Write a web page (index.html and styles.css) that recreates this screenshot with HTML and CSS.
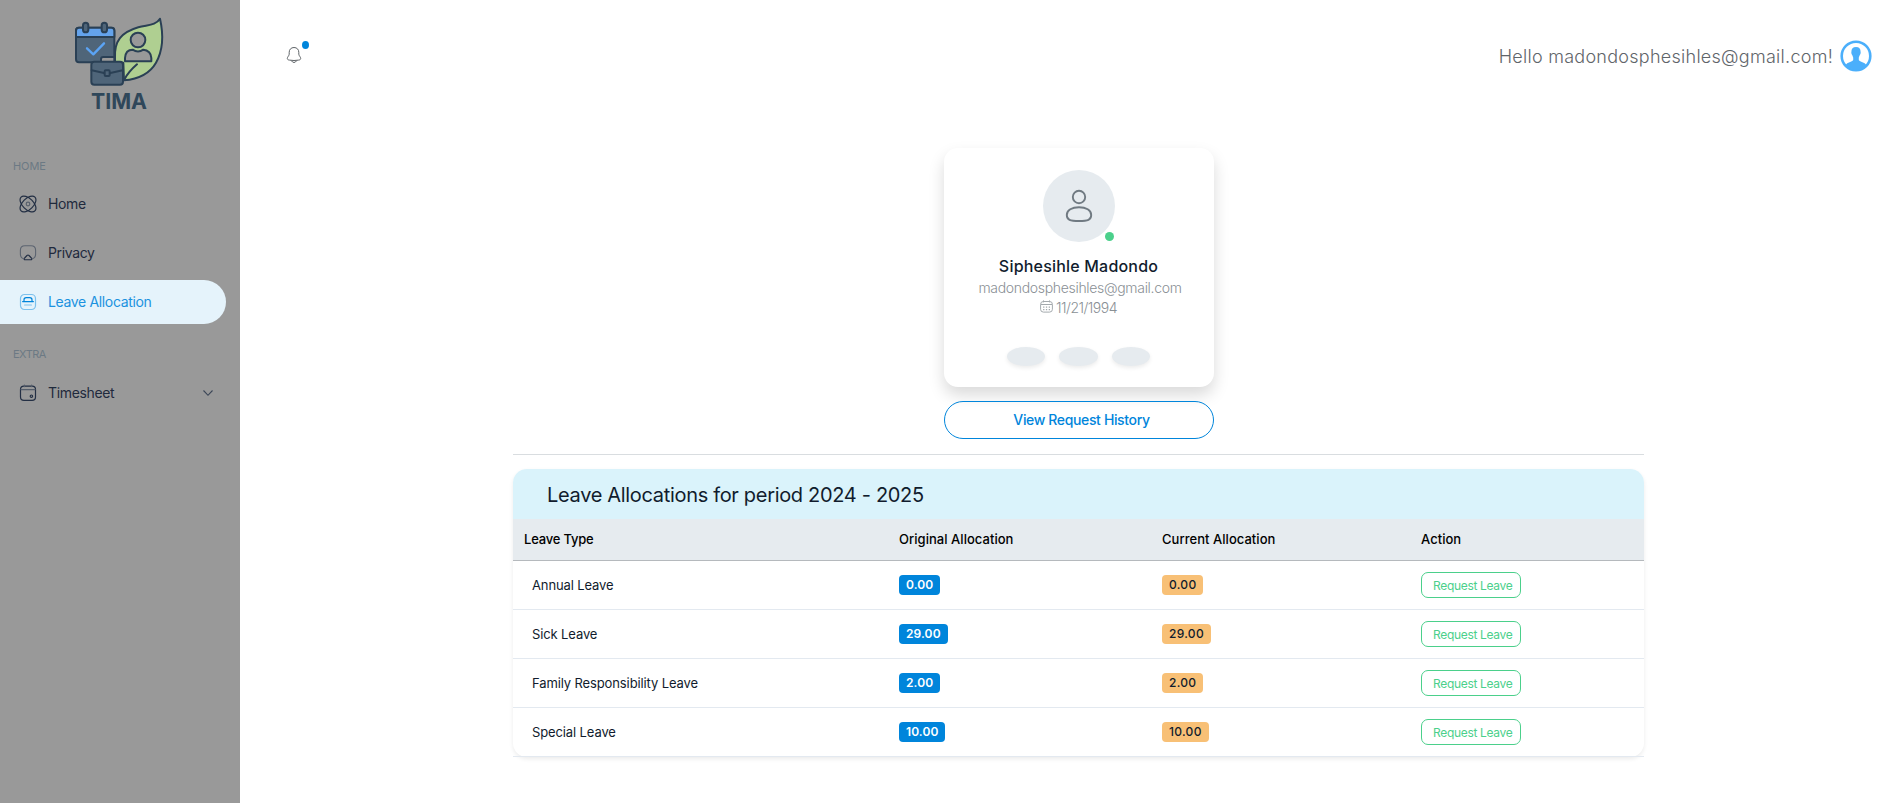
FILE: index.html
```html
<!DOCTYPE html>
<html lang="en">
<head>
<meta charset="utf-8">
<title>Leave Allocation - TIMA</title>
<link rel="stylesheet" href="styles.css">
</head>
<body>
<aside class="sidebar">
  <a class="brand" href="#">
    <svg width="120" height="110" viewBox="0 0 360 330" fill="none" stroke="#2a4055" stroke-width="6" stroke-linecap="round" stroke-linejoin="round">
      <path fill="#afcf91" d="M192 211C235 207 268 193 288 158C311 117 310 70 300 26C287 47 263 44 235 52C184 67 162 93 165 145L165 158H190Z"/>
      <path d="M194 207C202 192 215 177 231 163"/>
      <circle cx="234" cy="90" r="22" fill="#999"/>
      <path fill="#999" d="M195 154V144C196 127 206 119 218 119Q234 130 250 119C264 120 274 130 274 144V154Z"/>
      <rect x="48" y="53" width="115" height="104" rx="9" fill="#4f6579"/>
      <path fill="#64a3ec" d="M48 81V62Q48 53 57 53H154Q163 53 163 62V81Z"/>
      <rect x="69" y="38" width="16" height="29" rx="8" fill="#4f6579"/>
      <rect x="125" y="38" width="16" height="29" rx="8" fill="#4f6579"/>
      <path stroke="#5ba4f5" stroke-width="7" d="M81 115L100 133L132 100"/>
      <path fill="#999" d="M123 155V147Q123 141 130 141H163V155"/>
      <rect x="94" y="155" width="95" height="69" rx="9" fill="#4f6579"/>
      <path d="M95 181L132 189M151 189L188 181"/>
      <rect x="134" y="181" width="15" height="17" rx="3" fill="#4f6579"/>
      <text class="brand-name" x="93" y="297">TIMA</text>
    </svg>
  </a>
  <div class="nav-title">HOME</div>
  <nav class="nav">
    <a class="nav-item" href="#">
      <svg width="18" height="18" viewBox="0 0 18 18" fill="none" stroke="#232f44" stroke-width="1.2">
        <ellipse cx="9" cy="9" rx="9.8" ry="5.4" transform="rotate(45 9 9)"/>
        <ellipse cx="9" cy="9" rx="9.8" ry="5.4" transform="rotate(-45 9 9)"/>
        <circle cx="9" cy="9" r="1.8" stroke="#59616d"/>
      </svg>
      <span>Home</span>
    </a>
    <a class="nav-item" href="#">
      <svg width="18" height="18" viewBox="0 0 18 18" fill="none" stroke="#232f44" stroke-width="1.1" stroke-linejoin="round">
        <path stroke="#5c6470" d="M4.6 14.6C2 14.2 1.4 12.8 1.4 10V6.2C1.4 3 2.8 1.8 6 1.8H12C15.2 1.8 16.6 3 16.6 6.2V10C16.6 12.8 16 14.2 13.4 14.6"/>
        <path d="M6.4 15.8H11.6C13 15.8 13.2 14.9 12.4 14L10 11.5Q9 10.6 8 11.5L5.6 14C4.8 14.9 5 15.8 6.4 15.8Z"/>
      </svg>
      <span>Privacy</span>
    </a>
    <a class="nav-item nav-item-active" href="#">
      <svg width="18" height="18" viewBox="0 0 18 18" fill="none" stroke="#0085db" stroke-width="1.2" stroke-linecap="round">
        <rect x="1.5" y="1.5" width="15" height="15" rx="4" stroke="#7cc1ed"/>
        <path d="M3.6 8.6H14.4M5 8.4V6.8Q5 4.6 7.2 4.6H10.8Q13 4.6 13 6.8V8.4"/>
        <path stroke="#7cc1ed" d="M5.6 12H12.4"/>
      </svg>
      <span>Leave Allocation</span>
    </a>
  </nav>
  <div class="nav-title nav-title-extra">EXTRA</div>
  <nav class="nav">
    <a class="nav-item" href="#">
      <svg width="18" height="18" viewBox="0 0 18 18" fill="none" stroke="#232f44" stroke-width="1.2" stroke-linecap="round">
        <rect x="1.5" y="2.2" width="15" height="14.2" rx="3.4"/>
        <path stroke="#555e6b" d="M2 5.6H16M5.4 1V2.6M12.6 1V2.6"/>
        <circle cx="12.4" cy="12.2" r="1.2"/>
      </svg>
      <span>Timesheet</span>
      <svg class="chevron" width="10" height="10" viewBox="0 0 10 10" fill="none" stroke="#3b4657" stroke-width="1.1"><path d="M.5 2.5L5 7.3L9.5 2.5"/></svg>
    </a>
  </nav>
</aside>
<main class="page">
  <header class="topbar">
    <a class="bell" href="#">
      <svg width="16" height="18" viewBox="0 0 16 18" fill="none" stroke="#5f6468" stroke-width="1">
        <path d="M8 1.5C5 1.5 3.2 3.6 3.2 6.3V8.2C3.2 9.6 1.3 11 1.3 12.4C1.3 13.6 2.3 14 3.4 14.1Q8 14.9 12.6 14.1C13.7 14 14.7 13.6 14.7 12.4C14.7 11 12.8 9.6 12.8 8.2V6.3C12.8 3.6 11 1.5 8 1.5Z"/>
        <path d="M5.2 14.6Q8 18.4 10.8 14.6"/>
      </svg>
      <i class="bell-dot"></i>
    </a>
    <div class="account">
      <span>Hello madondosphesihles@gmail.com!</span>
      <svg width="32" height="32" viewBox="0 0 32 32">
        <circle cx="16" cy="16" r="14.3" fill="#fff" stroke="#4baffb" stroke-width="2.6"/>
        <path fill="#4baffb" d="M16 7C12.7 7 11.3 9 11.4 12C11.1 13.3 11.5 14.4 12.3 15.2L13.2 17.4V20C12 22 7.3 22 5.5 25.2A14.3 14.3 0 0 0 26.5 25.2C24.7 22 20 22 18.8 20V17.4L19.7 15.2C20.5 14.4 20.9 13.3 20.6 12C20.7 9 19.3 7 16 7Z"/>
      </svg>
    </div>
  </header>
  <section class="content">
    <div class="profile">
      <div class="avatar">
        <svg width="32" height="36" viewBox="0 0 32 36" fill="none" stroke="#707a82" stroke-width="1.9">
          <circle cx="16" cy="9" r="6.2"/>
          <path d="M16 19.2C23 19.2 28.2 22.2 28.2 27C28.2 31.8 25 33 16 33C7 33 3.8 31.8 3.8 27C3.8 22.2 9 19.2 16 19.2Z"/>
        </svg>
        <i class="online"></i>
      </div>
      <h5 class="name">Siphesihle Madondo</h5>
      <div class="email">madondosphesihles@gmail.com</div>
      <div class="birth">
        <svg width="13" height="13" viewBox="0 0 13 13" fill="none" stroke="#a3a9ad" stroke-width="1">
          <rect x=".6" y="1.5" width="11.8" height="10.6" rx="2.8"/>
          <path d="M1 4.5H12M3.5 .4V2.4M9.5 .4V2.4"/>
          <path stroke-width="1.3" stroke-dasharray="1.3 1.5" d="M3.1 7.2H10M3.1 9.6H10"/>
        </svg>
        <span>11/21/1994</span>
      </div>
      <div class="pills"><i></i><i></i><i></i></div>
    </div>
    <a class="history" href="#">View Request History</a>
    <hr class="rule">
    <div class="allocations">
      <h4 class="alloc-title">Leave Allocations for period 2024 - 2025</h4>
      <div class="row head"><span>Leave Type</span><span>Original Allocation</span><span>Current Allocation</span><span>Action</span></div>
      <div class="row"><span class="type">Annual Leave</span><span><b class="badge">0.00</b></span><span><b class="badge current">0.00</b></span><span><a class="request" href="#">Request Leave</a></span></div>
      <div class="row"><span class="type">Sick Leave</span><span><b class="badge">29.00</b></span><span><b class="badge current">29.00</b></span><span><a class="request" href="#">Request Leave</a></span></div>
      <div class="row"><span class="type">Family Responsibility Leave</span><span><b class="badge">2.00</b></span><span><b class="badge current">2.00</b></span><span><a class="request" href="#">Request Leave</a></span></div>
      <div class="row"><span class="type">Special Leave</span><span><b class="badge">10.00</b></span><span><b class="badge current">10.00</b></span><span><a class="request" href="#">Request Leave</a></span></div>
    </div>
  </section>
</main>
</body>
</html>
```
FILE: styles.css
```css
* { box-sizing: border-box; }
body {
  margin: 0;
  height: 803px;
  display: flex;
  overflow: hidden;
  background: #fff;
  font-family: Inter, "Liberation Sans", sans-serif;
  font-size: 14px;
  color: #111c2d;
}
a { color: inherit; text-decoration: none; }
svg { display: block; flex: none; }
h4, h5 { margin: 0; }

.sidebar { width: 240px; flex: none; background: #999; }
.brand { display: block; padding: 10px 0 0 60px; height: 156px; }
.brand-name { font-size: 64px; font-weight: 700; fill: #2f475a; stroke: none; }
.nav-title { height: 20px; line-height: 20px; padding-left: 13px; font-size: 11px; color: #6c7984; letter-spacing: -.05px; }
.nav-title-extra { margin-top: 20px; letter-spacing: -.5px; }
.nav { display: flex; flex-direction: column; gap: 5px; padding: 6px 14px 0 0; }
.nav-item { display: flex; align-items: center; gap: 11px; height: 44px; padding: 0 13px 0 19px; letter-spacing: -.35px; color: #1f2a3d; }
.nav-item span { padding-bottom: 1px; }
.nav-item-active { background: #e5f3fb; color: #1b92df; border-radius: 0 22px 22px 0; }
.nav-title-extra + .nav { padding-top: 7px; }
.chevron { margin-left: auto; }

.page { flex: 1; min-width: 0; }
.topbar { height: 112px; display: flex; justify-content: space-between; align-items: center; padding: 0 15px 0 46px; }
.bell { position: relative; padding-bottom: 2px; }
.bell-dot { position: absolute; left: 16px; top: -5px; width: 7px; height: 8px; border-radius: 50%; background: #0085db; }
.account { display: flex; align-items: center; gap: 7px; font-size: 18px; font-weight: 300; color: #5f656a; letter-spacing: .27px; }

.content { width: 1131px; margin: 36px 0 0 273px; display: flex; flex-direction: column; align-items: center; }
.profile { width: 270px; height: 239px; border-radius: 14px; padding-top: 22px; background: #fff; box-shadow: 0 8px 16px rgba(0, 0, 0, .15); display: flex; flex-direction: column; align-items: center; }
.avatar { position: relative; width: 72px; height: 72px; border-radius: 50%; background: #e6ebef; display: flex; align-items: center; justify-content: center; }
.online { position: absolute; right: 1px; bottom: 1px; width: 9px; height: 9px; border-radius: 50%; background: #4bd08b; }
.name { margin-top: 13px; font-size: 16px; line-height: 22px; font-weight: 500; letter-spacing: .2px; }
.email { margin-top: 1px; padding-left: 3px; line-height: 20px; font-weight: 300; letter-spacing: -.32px; color: #8a9095; }
.birth { display: flex; align-items: center; gap: 3px; line-height: 20px; font-weight: 300; letter-spacing: -.5px; color: #8a9095; }
.birth svg { margin-bottom: 3px; }
.pills { margin-top: 29px; display: flex; gap: 14px; }
.pills i { width: 38.5px; height: 19px; border-radius: 50%; background: #e6ebef; box-shadow: 0 2px 4px rgba(0, 0, 0, .08); }
.history { width: 270px; height: 38px; margin-top: 14px; border: 1px solid #0085db; border-radius: 19px; text-align: center; line-height: 36px; padding-left: 6px; font-weight: 500; letter-spacing: -.36px; color: #0085db; }
.rule { width: 100%; height: 1px; margin: 15px 0 14px; border: 0; background: #d9dde0; }

.allocations { width: 100%; border-radius: 14px; box-shadow: 0 2px 4px rgba(0, 0, 0, .08); }
.alloc-title { height: 50px; line-height: 52px; padding-left: 34px; border-radius: 14px 14px 0 0; background: #daf3fb; font-size: 20px; font-weight: 400; letter-spacing: -.32px; }
.row { display: grid; grid-template-columns: 386px 263px 259px 1fr; align-items: center; height: 49px; border-bottom: 1px solid #e3e9f0; font-size: 13px; }
.head { height: 42px; padding-bottom: 2px; background: #e6ebef; border-bottom-color: #b5b9bd; font-weight: 500; color: #000; letter-spacing: .04px; }
.head span:first-child { padding-left: 11px; letter-spacing: -.2px; }
.type { padding-left: 19px; letter-spacing: -.12px; }
.badge { display: inline-block; height: 20px; line-height: 20px; padding: 0 7px; border-radius: 4px; background: #0085db; color: #fff; font-size: 12px; font-weight: 600; letter-spacing: .1px; }
.current { background: #f8c076; color: #111c2d; font-weight: 500; letter-spacing: .3px; }
.request { display: block; width: 100px; height: 26px; border: 1px solid #4bd08b; border-radius: 7px; padding-left: 11px; line-height: 25px; font-size: 12px; letter-spacing: -.32px; color: #4bd08b; }
```
